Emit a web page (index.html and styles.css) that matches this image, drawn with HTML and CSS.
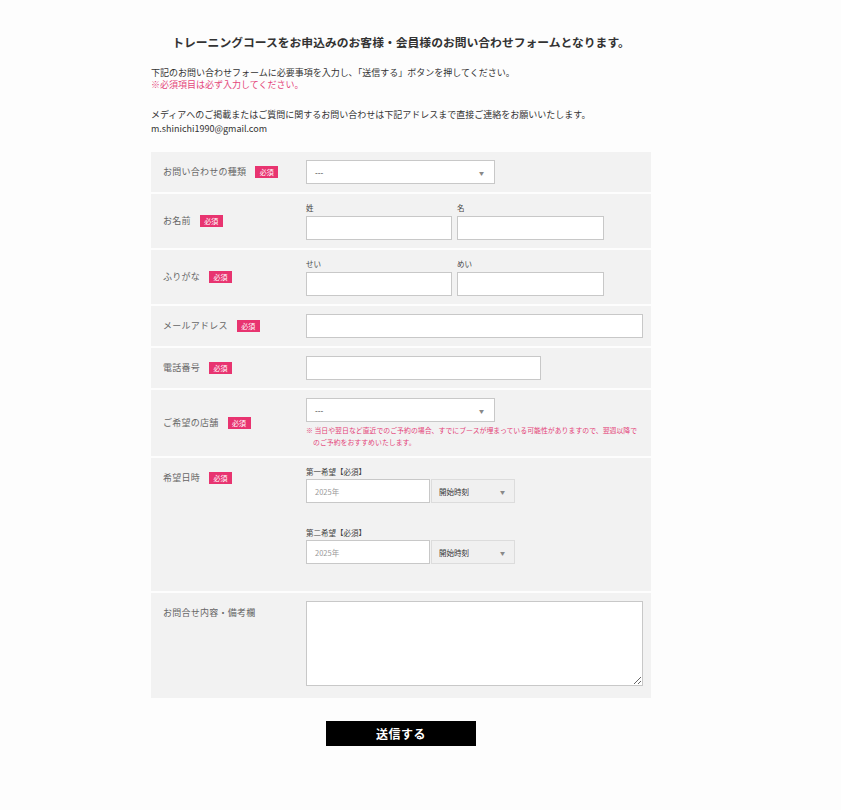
FILE: index.html
```html
<!DOCTYPE html>
<html lang="ja">
<head>
<meta charset="utf-8">
<title>お問い合わせフォーム</title>
<link rel="stylesheet" href="styles.css">
</head>
<body>
<div class="wrap">
  <h1 class="title">トレーニングコースをお申込みのお客様・会員様のお問い合わせフォームとなります。</h1>
  <p class="intro">下記のお問い合わせフォームに必要事項を入力し､「送信する」ボタンを押してください。<br><span class="pink">※必須項目は必ず入力してください。</span></p>
  <p class="intro intro2">メディアへのご掲載またはご質問に関するお問い合わせは下記アドレスまで直接ご連絡をお願いいたします。<br>m.shinichi1990@gmail.com</p>

  <form class="form">
    <div class="row">
      <div class="label">お問い合わせの種類<span class="req">必須</span></div>
      <div class="field">
        <div class="select w189"><span>---</span><span class="arrow">▼</span></div>
      </div>
    </div>
    <div class="row">
      <div class="label">お名前<span class="req">必須</span></div>
      <div class="field pair">
        <div class="col"><div class="sub">姓</div><input class="input w146" type="text"></div>
        <div class="col"><div class="sub">名</div><input class="input w147" type="text"></div>
      </div>
    </div>
    <div class="row">
      <div class="label">ふりがな<span class="req">必須</span></div>
      <div class="field pair">
        <div class="col"><div class="sub">せい</div><input class="input w146" type="text"></div>
        <div class="col"><div class="sub">めい</div><input class="input w147" type="text"></div>
      </div>
    </div>
    <div class="row">
      <div class="label">メールアドレス<span class="req">必須</span></div>
      <div class="field"><input class="input wfull" type="text"></div>
    </div>
    <div class="row">
      <div class="label">電話番号<span class="req">必須</span></div>
      <div class="field"><input class="input w235" type="text"></div>
    </div>
    <div class="row">
      <div class="label">ご希望の店舗<span class="req">必須</span></div>
      <div class="field">
        <div class="select w189"><span>---</span><span class="arrow">▼</span></div>
        <p class="note">※ 当日や翌日など直近でのご予約の場合、すでにブースが埋まっている可能性がありますので、翌週以降で<br>のご予約をおすすめいたします。</p>
      </div>
    </div>
    <div class="row top">
      <div class="label">希望日時<span class="req">必須</span></div>
      <div class="field">
        <div class="dategroup">
          <div class="sub">第一希望【必須】</div>
          <div class="dateline"><div class="date">2025年</div><div class="time"><span>開始時刻</span><span class="arrow">▼</span></div></div>
        </div>
        <div class="dategroup second">
          <div class="sub">第二希望【必須】</div>
          <div class="dateline"><div class="date">2025年</div><div class="time"><span>開始時刻</span><span class="arrow">▼</span></div></div>
        </div>
      </div>
    </div>
    <div class="row top last">
      <div class="label">お問合せ内容・備考欄</div>
      <div class="field"><textarea class="textarea"></textarea></div>
    </div>
    <div class="actions"><button type="button" class="submit">送信する</button></div>
  </form>
</div>
</body>
</html>
```

FILE: styles.css
```css
html, body {
  margin: 0;
  padding: 0;
  background: #fdfdfd;
}
body {
  font-family: "Noto Sans CJK JP", "Noto Sans", sans-serif;
  color: #333;
}
.wrap {
  width: 500px;
  margin-left: 151px;
  padding-top: 33px;
}
.title {
  margin: 0;
  text-align: center;
  font-size: 11.8px;
  line-height: 18px;
  font-weight: 700;
  color: #333;
}
.intro {
  margin: 16px 0 0;
  font-size: 9px;
  line-height: 12px;
  color: #333;
}
.intro2 {
  margin-top: 17px;
  line-height: 14px;
}
.pink { color: #e4457a; }

.form {
  margin-top: 16px;
  display: flex;
  flex-direction: column;
  gap: 2px;
}
.row {
  display: flex;
  align-items: center;
  background: #f2f2f2;
}
.row.top { align-items: flex-start; }
.label {
  width: 143px;
  flex: none;
  padding-left: 12px;
  font-size: 9px;
  line-height: 12px;
  letter-spacing: 0.25px;
  color: #666;
  display: flex;
  align-items: center;
}
.row.top .label { padding-top: 14px; }
.req {
  display: inline-block;
  margin-left: 9px;
  width: 23px;
  height: 12px;
  line-height: 12px;
  text-align: center;
  background: #e83470;
  color: #fff;
  font-size: 7px;
  letter-spacing: 0;
}
.field {
  flex: 1;
  padding: 8px 8px 8px 0;
}
.pair {
  display: flex;
  gap: 5px;
}
.col { display: flex; flex-direction: column; }
.sub {
  font-size: 7.5px;
  line-height: 12px;
  color: #444;
  margin-bottom: 2px;
}
.input {
  display: block;
  box-sizing: border-box;
  height: 24px;
  margin: 0;
  border: 1px solid #c8c8c8;
  background: #fff;
  border-radius: 0;
  padding: 0 8px;
}
.w146 { width: 146px; }
.w147 { width: 147px; }
.w235 { width: 235px; }
.wfull { width: 337px; }
.w189 { width: 189px; }
.select {
  box-sizing: border-box;
  height: 24px;
  border: 1px solid #c8c8c8;
  background: #fff;
  display: flex;
  align-items: center;
  justify-content: space-between;
  padding: 0 10px 0 8px;
  font-size: 8px;
  color: #333;
}
.arrow {
  font-size: 5px;
  color: #888;
}
.note {
  margin: 2px 0 0;
  font-size: 6.9px;
  line-height: 12px;
  color: #e4457a;
  padding-left: 7px;
  text-indent: -7px;
  white-space: nowrap;
}
.dategroup { margin-bottom: 24px; }
.dategroup.second { margin-bottom: 19px; }
.dategroup .sub { line-height: 11px; margin-bottom: 2px; font-size: 7.5px; }
.dateline {
  display: flex;
  gap: 1px;
}
.date {
  box-sizing: border-box;
  width: 124px;
  height: 24px;
  border: 1px solid #c8c8c8;
  background: #fff;
  display: flex;
  align-items: center;
  padding-left: 8px;
  font-size: 7.5px;
  color: #999;
}
.time {
  box-sizing: border-box;
  width: 84px;
  height: 24px;
  border: 1px solid #dcdcdc;
  background: #f0f0f0;
  display: flex;
  align-items: center;
  justify-content: space-between;
  padding: 0 9px 0 7px;
  font-size: 7.5px;
  color: #333;
}
.textarea {
  display: block;
  box-sizing: border-box;
  width: 337px;
  height: 85px;
  margin: 0;
  border: 1px solid #c8c8c8;
  background: #fff;
  border-radius: 0;
}
.row.last .field { padding-bottom: 12px; }
.actions {
  display: flex;
  justify-content: center;
  margin-top: 21px;
}
.submit {
  width: 150px;
  height: 25px;
  border: 0;
  border-radius: 0;
  background: #000;
  color: #fff;
  font-family: "Noto Sans CJK JP", sans-serif;
  font-weight: 700;
  font-size: 12px;
  letter-spacing: 0.5px;
  box-shadow: 0 2px 0 #cfcfcf;
  cursor: pointer;
}
```
